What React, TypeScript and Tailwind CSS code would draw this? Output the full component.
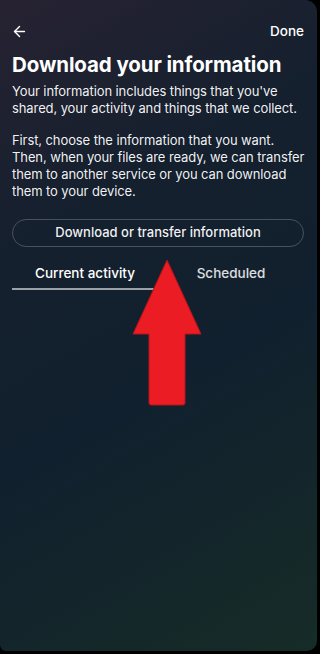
import { ArrowLeft } from 'lucide-react';

export default function App() {
  return (
    <div className="w-[320px] h-[654px] bg-black overflow-hidden" style={{ fontFamily: 'Inter, "Noto Sans", sans-serif' }}>
      <div className="relative w-[317px] h-[651px] rounded-tr-[12px] rounded-br-[10px] rounded-bl-[6px] overflow-hidden bg-[linear-gradient(150deg,#272232_0%,#15202e_30%,#11202e_58%,#162c27_100%)] text-white">
        {/* header */}
        <div className="flex items-center justify-between pl-[11px] pr-[13px] pt-[22px] h-[40px]">
          <ArrowLeft className="w-[17px] h-[17px]" strokeWidth={2} />
          <span className="text-[13.5px] font-medium">Done</span>
        </div>

        <div className="pl-[12px] pr-[6px]">
          <h1 className="text-[20.5px] font-bold leading-[26px] mt-[12px] tracking-[-0.1px]">Download your information</h1>
          <p className="text-[13px] leading-[17px] mt-[5px] text-white/95 tracking-[-0.1px]">
            Your information includes things that you've<br />
            shared, your activity and things that we collect.
          </p>
          <p className="text-[13px] leading-[17px] mt-[15px] text-white/95 tracking-[-0.1px] whitespace-nowrap">
            First, choose the information that you want.<br />
            Then, when your files are ready, we can transfer<br />
            them to another service or you can download<br />
            them to your device.
          </p>

          <button className="mt-[19px] w-[292px] h-[28px] rounded-full border border-[#48525d] text-[13px] font-medium text-white/95">
            Download or transfer information
          </button>

          {/* tabs */}
          <div className="grid grid-cols-2 w-[292px] mt-[11px]">
            <div className="flex flex-col items-center">
              <span className="h-[30px] flex items-center text-[13.5px] font-medium">Current activity</span>
              <div className="w-full h-[2px] bg-[#9aa1a8]" />
            </div>
            <div className="flex flex-col items-center">
              <span className="h-[30px] flex items-center text-[13.5px] font-medium text-white/85">Scheduled</span>
            </div>
          </div>
        </div>

        {/* red annotation arrow */}
        <svg className="absolute left-[130px] top-[258px]" width="74" height="150" viewBox="0 0 74 150">
          <path d="M37 2 L71 76 L55 76 L55 145 Q55 147 53 147 L21 147 Q19 147 19 145 L19 76 L3 76 Z" fill="#ec1c24" stroke="#b3141a" strokeWidth="1" strokeLinejoin="round" />
        </svg>
      </div>
    </div>
  );
}
